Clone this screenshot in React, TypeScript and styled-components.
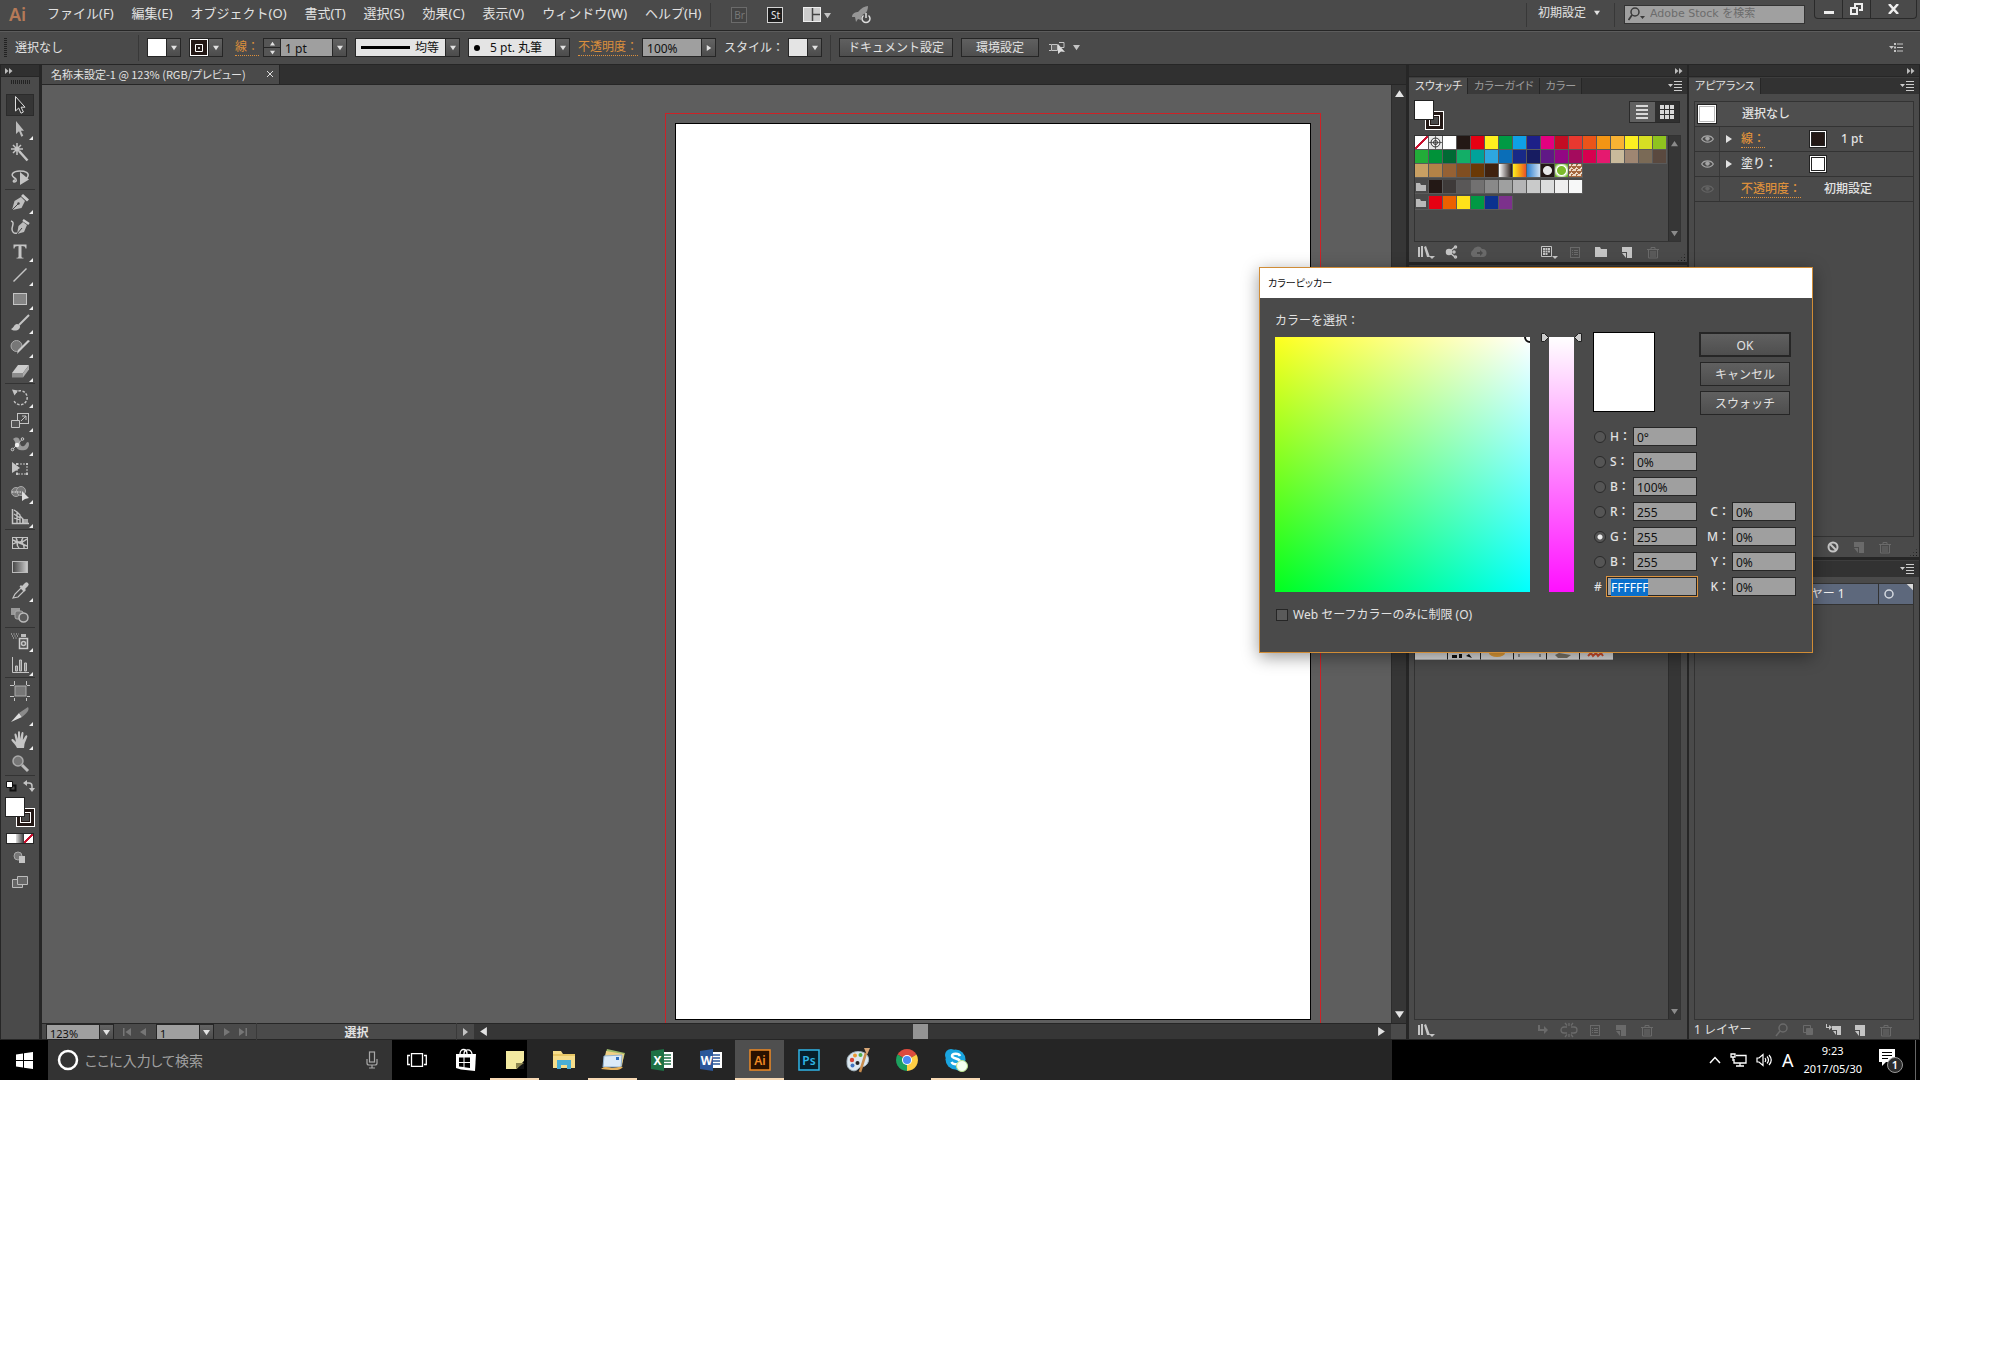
import React, { useEffect, useRef } from "react";
import styled, { createGlobalStyle, css } from "styled-components";

const c = {
  panel: "#4a4a4a",
  strip: "#323232",
  line: "#262626",
  edge: "#5c5c5c",
  field: "#9f9f9f",
  text: "#e2e2e2",
  dim: "#9c9c9c",
  off: "#6a6a6a",
  icon: "#c4c4c4",
  orange: "#dc8f3c",
  canvas: "#5e5e5e",
};

const Global = createGlobalStyle`
  *, *::before, *::after { box-sizing: border-box; }
  body { margin: 0; background: #fff; }
  body, button, input, select {
    font-family: "Noto Sans", "Noto Sans CJK JP", sans-serif;
    font-size: 12px;
    line-height: 16px;
  }
  button, input, select { margin: 0; padding: 0; border: 0; border-radius: 0; background: none; color: inherit; }
  svg { display: block; flex: none; }
`;

/* ---------- shell ---------- */

const Desktop = styled.main`
  position: relative;
  margin-right: 80px;
  aspect-ratio: 16 / 9;
  display: flex;
  flex-direction: column;
  overflow: hidden;
  color: ${c.text};
  background: ${c.panel};
  white-space: nowrap;
`;

const Bar = styled.div`
  flex: none;
  display: flex;
  align-items: center;
  background: ${c.panel};
  border-bottom: 1px solid ${c.line};
`;

const MenuBar = styled(Bar)`
  height: 31px;
  padding: 0 3px 0 9px;
`;

const Logo = styled.span`
  width: 29px;
  padding-bottom: 3px;
  font-size: 18px;
  line-height: 24px;
  font-weight: 600;
  color: #b67a58;
`;

const MenuItem = styled.button`
  padding: 0 9px 5px;
  font-size: 13px;
  line-height: 20px;
`;

const Divider = styled.span<{ $h?: number }>`
  flex: none;
  width: 1px;
  height: ${(p) => p.$h ?? 24}px;
  background: #383838;
`;

const Spacer = styled.span`
  flex: 1;
`;

const AppLinks = styled.div`
  display: flex;
  align-items: center;
  gap: 20px;
  padding-left: 15px;
  margin-left: 5px;
`;

const Badge = styled.button<{ $on?: boolean }>`
  width: 16px;
  height: 16px;
  border: 1px solid ${(p) => (p.$on ? "#d4d4d4" : "#6b6b6b")};
  background: ${(p) => (p.$on ? "#1d1d1d" : "#444")};
  color: ${(p) => (p.$on ? "#e8e8e8" : "#777")};
  font-size: 10px;
  line-height: 12px;
`;

const IconButton = styled.button<{ $dim?: boolean }>`
  display: flex;
  align-items: center;
  gap: 3px;
  color: ${(p) => (p.$dim ? c.off : c.icon)};
`;

const WorkspaceSelect = styled.label`
  display: flex;
  align-items: center;
  gap: 8px;
  padding: 0 14px 4px 11px;
  select {
    appearance: none;
    width: 48px;
  }
`;

const StockSearch = styled.label`
  display: flex;
  align-items: center;
  gap: 4px;
  width: 181px;
  height: 19px;
  margin: 0 9px 2px;
  padding: 0 3px;
  border: 1px solid #333;
  background: #a0a0a0;
  color: #3a3a3a;
  input {
    flex: 1;
    min-width: 0;
    outline: none;
    font-family: "DejaVu Sans", "Noto Sans CJK JP", sans-serif;
    font-size: 11px;
  }
  input::placeholder {
    color: #6c6c6c;
  }
`;

const WindowButtons = styled.div`
  align-self: flex-start;
  display: flex;
  height: 19px;
  border: 1px solid #2a2a2a;
  border-top: 0;
  border-radius: 0 0 4px 4px;
  button {
    width: 28px;
    display: grid;
    place-items: center;
    border-right: 1px solid #2a2a2a;
  }
  button:last-child {
    width: 45px;
    border-right: 0;
  }
`;

/* ---------- control bar ---------- */

const ControlBar = styled(Bar)`
  height: 34px;
  gap: 8px;
  padding: 0 17px 1px 4px;
  border-top: 1px solid ${c.edge};
`;

const Grip = styled.span<{ $wide?: boolean }>`
  flex: none;
  width: ${(p) => (p.$wide ? 19 : 3)}px;
  height: ${(p) => (p.$wide ? 4 : 20)}px;
  background: repeating-linear-gradient(
    ${(p) => (p.$wide ? "90deg" : "180deg")},
    #222 0 1px,
    transparent 1px 2px
  );
`;

const SelectionLabel = styled.span`
  width: 115px;
`;

const Group = styled.div<{ $indent?: boolean }>`
  display: flex;
  align-items: center;
  gap: 4px;
  padding-left: ${(p) => (p.$indent ? 4 : 0)}px;
`;

const HotLabel = styled.label`
  color: ${c.orange};
  border-bottom: 1px dotted ${c.orange};
`;

const Combo = styled.div`
  display: flex;
  height: 19px;
  border: 1px solid ${c.line};
  background: #565656;
`;

const Arrow = styled.button`
  width: 14px;
  display: grid;
  place-items: center;
  border-left: 1px solid ${c.line};
  background: linear-gradient(#636363, #4c4c4c);
`;

const Stepper = styled.span`
  display: flex;
  flex-direction: column;
  width: 17px;
  border-right: 1px solid ${c.line};
  button {
    flex: 1;
    display: grid;
    place-items: center;
  }
  button + button {
    border-top: 1px solid ${c.line};
  }
`;

const ComboInput = styled.input<{ $w: number }>`
  width: ${(p) => p.$w}px;
  padding: 2px 0 0 4px;
  background: ${c.field};
  color: #111;
`;

const SelectFace = styled.label<{ $w: number }>`
  width: ${(p) => p.$w}px;
  display: flex;
  align-items: center;
  gap: 5px;
  padding: 0 4px 0 5px;
  background: #e4e4e4;
  color: #111;
  select {
    appearance: none;
    flex: 1;
    min-width: 0;
  }
`;

const Chip = styled.button<{ $kind: "fill" | "stroke" | "style" }>`
  width: 18px;
  display: grid;
  place-items: center;
  background: ${(p) => (p.$kind === "stroke" ? "#231815" : p.$kind === "fill" ? "#fff" : "#e4e4e4")};
  ${(p) => p.$kind === "stroke" && "box-shadow: inset 0 0 0 1px #fff;"}
`;

const push = css`
  border: 1px solid ${c.line};
  background: linear-gradient(#606060, #4e4e4e);
  color: ${c.text};
`;

const BarButton = styled.button`
  ${push}
  min-width: 78px;
  height: 19px;
  padding: 0 8px;
`;

/* ---------- workspace ---------- */

const Workspace = styled.div`
  flex: 1;
  min-height: 0;
  display: flex;
  background: ${c.line};
  border-bottom: 1px solid ${c.line};
`;

const Toolbar = styled.nav`
  width: 40px;
  margin-right: 2px;
  display: flex;
  flex-direction: column;
  align-items: center;
  background: ${c.panel};
  border: 1px solid ${c.line};
  border-width: 0 1px;
`;

const DockHead = styled.div<{ $left?: boolean }>`
  flex: none;
  align-self: stretch;
  height: 12px;
  display: flex;
  align-items: center;
  justify-content: ${(p) => (p.$left ? "flex-start" : "flex-end")};
  padding: 0 4px;
  background: #303030;
  border-bottom: 1px solid ${c.line};
  color: #bbb;
`;

const GripRow = styled.div`
  padding: 3px 0 9px;
`;

const ToolGroup = styled.div`
  display: flex;
  flex-direction: column;
  width: 30px;
  align-items: center;
  border-bottom: 1px solid #333;
  margin-bottom: 1px;
`;

const ToolButton = styled.button<{ $on?: boolean; $more?: boolean }>`
  position: relative;
  width: 28px;
  height: 22px;
  margin: 1px 0;
  display: grid;
  place-items: center;
  color: ${c.icon};
  ${(p) => p.$on && "background: #353535; box-shadow: inset 0 0 0 1px #2b2b2b;"}
  &::after {
    content: "";
    display: ${(p) => (p.$more ? "block" : "none")};
    position: absolute;
    right: 1px;
    bottom: 0;
    border: 2px solid transparent;
    border-right-color: #eee;
    border-bottom-color: #eee;
  }
`;

const MiniRow = styled.div`
  display: flex;
  justify-content: space-between;
  width: 30px;
  padding: 3px 0 5px;
  color: ${c.icon};
`;

const FillStroke = styled.div`
  position: relative;
  width: 30px;
  height: 30px;
`;

const FillBox = styled.button`
  position: absolute;
  left: 0;
  top: 0;
  width: 20px;
  height: 20px;
  background: #fff;
  border: 1px solid #222;
`;

const StrokeBox = styled.button`
  position: absolute;
  right: 0;
  bottom: 0;
  width: 19px;
  height: 19px;
  background: ${c.panel};
  border: 1px solid #fff;
  box-shadow: inset 0 0 0 3px #231815, inset 0 0 0 4px #fff, inset 0 0 0 5px #231815;
`;

const ColorModes = styled.div`
  display: flex;
  width: 28px;
  height: 11px;
  margin: 6px 0 2px;
  border: 1px solid ${c.line};
  button {
    flex: 1;
    background: #fff;
  }
  button:nth-child(2) {
    background: linear-gradient(90deg, #ddd, #333);
  }
  button:nth-child(3) {
    background: linear-gradient(135deg, #fff 42%, #c8102e 43% 57%, #fff 58%);
  }
`;

const Document = styled.section`
  flex: 1;
  min-width: 0;
  display: flex;
  flex-direction: column;
`;

const TabStrip = styled.div`
  flex: none;
  height: 20px;
  display: flex;
  background: #303030;
  border-bottom: 1px solid ${c.line};
`;

const DocTab = styled.div`
  display: flex;
  align-items: center;
  justify-content: space-between;
  width: 238px;
  padding: 0 6px 1px 9px;
  background: ${c.panel};
  border-right: 1px solid ${c.line};
  font-size: 11px;
  font-family: "Noto Sans CJK JP", sans-serif;
  font-feature-settings: "palt";
`;

const CanvasRow = styled.div`
  flex: 1;
  min-height: 0;
  display: flex;
`;

const Canvas = styled.div`
  position: relative;
  flex: 1;
  background: ${c.canvas};
`;

const Bleed = styled.div`
  position: absolute;
  top: 28px;
  right: 70px;
  bottom: 0;
  width: 656px;
  border: 1px solid #cc2227;
  border-bottom: 0;
`;

const Artboard = styled.div`
  position: absolute;
  top: 38px;
  right: 80px;
  bottom: 3px;
  width: 636px;
  background: #fff;
  border: 1px solid #000;
`;

const VScroll = styled.div<{ $w?: number }>`
  flex: none;
  width: ${(p) => p.$w ?? 15}px;
  display: flex;
  flex-direction: column;
  align-items: center;
  justify-content: space-between;
  padding: 4px 0;
  background: #363636;
  color: ${(p) => (p.$w ? "#8b8b8b" : "#e4e4e4")};
  border-left: 1px solid #2c2c2c;
`;

const StatusRow = styled.div`
  flex: none;
  height: 16px;
  display: flex;
  align-items: center;
  background: ${c.panel};
  border-top: 1px solid ${c.line};
`;

const StatusCombo = styled(Combo)`
  height: 15px;
  border-bottom: 0;
  font-size: 11px;
`;

const StatusInput = styled(ComboInput)`
  font-size: 11px;
  line-height: 14px;
  padding: 3px 0 0 3px;
`;

const NavGroup = styled.div`
  display: flex;
  justify-content: space-between;
  width: 42px;
  padding: 0 9px;
  color: #767676;
`;

const StatusText = styled.span`
  flex: none;
  width: 201px;
  padding-top: 2px;
  text-align: center;
  font-weight: 600;
  border: 1px solid #3a3a3a;
  border-width: 0 1px;
`;

const HScroll = styled.div`
  flex: 1;
  align-self: stretch;
  display: flex;
  align-items: center;
  justify-content: space-between;
  padding: 0 5px;
  background: #363636;
`;

const HThumb = styled.span`
  width: 15px;
  height: 15px;
  margin-right: 24px;
  background: #949494;
`;

/* ---------- docks ---------- */

const Dock = styled.aside<{ $w: number }>`
  flex: none;
  width: ${(p) => p.$w}px;
  margin-left: 3px;
  display: flex;
  flex-direction: column;
  & + & {
    margin: 0 1px 0 2px;
  }
`;

const Panel = styled.section<{ $basis?: number }>`
  flex: ${(p) => (p.$basis ? `0 0 ${p.$basis}px` : "1 1 0")};
  min-height: 0;
  display: flex;
  flex-direction: column;
  background: ${c.panel};
  & + & {
    margin-top: 3px;
  }
`;

const PanelTabs = styled.div`
  flex: none;
  height: 17px;
  display: flex;
  align-items: stretch;
  background: ${c.strip};
  border-top: 1px solid #3d3d3d;
`;

const PanelTab = styled.button<{ $on?: boolean }>`
  padding: 0 5px 2px 6px;
  font-family: "Noto Sans CJK JP", sans-serif;
  font-size: 11px;
  font-feature-settings: "palt";
  line-height: 14px;
  color: ${(p) => (p.$on ? c.text : c.dim)};
  background: ${(p) => (p.$on ? c.panel : "#3a3a3a")};
  border-right: 1px solid ${c.line};
`;

const PanelMenu = styled.button`
  margin-left: auto;
  padding-right: 5px;
  color: #ccc;
`;

const SwatchHead = styled.div`
  display: flex;
  justify-content: space-between;
  padding: 6px 7px 5px 5px;
`;

const ViewToggle = styled.div`
  display: flex;
  width: 51px;
  height: 22px;
  margin-top: 1px;
  border: 1px solid #2a2a2a;
  button {
    flex: 1;
    display: grid;
    place-items: center;
    background: #606060;
    color: #d8d8d8;
  }
  button + button {
    background: #303030;
  }
`;

const ListBox = styled.div<{ $h?: number; $top?: number }>`
  ${(p) => (p.$h ? `height: ${p.$h}px;` : "flex: 1; min-height: 0;")}
  margin: ${(p) => p.$top ?? 0}px 6px 0 5px;
  display: flex;
  border: 1px solid #333;
`;

const SwatchRows = styled.div`
  flex: 1;
`;

const SwatchRow = styled.div<{ $gap?: boolean }>`
  display: flex;
  margin-top: ${(p) => (p.$gap ? 2 : 0)}px;
`;

const Swatch = styled.button<{ $bg?: string }>`
  width: 14px;
  height: 14px;
  background: ${(p) => p.$bg ?? "transparent"};
  border: 1px solid #5a5a5a;
  border-width: 0 1px 1px 0;
`;

const Footer = styled.div<{ $end: number; $h: number }>`
  flex: none;
  height: ${(p) => p.$h}px;
  display: flex;
  align-items: center;
  gap: 8px;
  padding: 0 ${(p) => p.$end}px 0 8px;
`;

const LayerFooter = styled(Footer)`
  padding-left: 5px;
`;

const FootButton = styled(IconButton)`
  width: 18px;
  height: 16px;
  justify-content: center;
  gap: 0;
`;

const Corner = styled.span`
  align-self: flex-end;
  width: 9px;
  height: 9px;
  margin-left: 7px;
  background: radial-gradient(#1c1c1c 40%, transparent 45%) 0 0 / 3px 3px;
  clip-path: polygon(100% 0, 100% 100%, 0 100%);
`;

const SymbolRow = styled.div`
  display: flex;
  align-self: flex-start;
  flex: 1;
`;

const SymbolCell = styled.button`
  width: 33px;
  height: 33px;
  background: #dcdcdc;
  border-right: 1px solid #222;
  border-bottom: 1px solid #aaa;
  &:last-child {
    border-right: 0;
  }
`;

const Rows = styled.div<{ $top?: number }>`
  flex: 1;
  min-height: 0;
  margin: ${(p) => p.$top ?? 6}px 5px 0;
  border: 1px solid #333;
`;

const AppearanceRow = styled.div<{ $head?: boolean }>`
  display: flex;
  align-items: center;
  height: 25px;
  padding-left: ${(p) => (p.$head ? 2 : 0)}px;
  border-bottom: 1px solid #333;
  background: ${(p) => (p.$head ? "#4e4e4e" : "transparent")};
  font-weight: 500;
`;

const EyeCell = styled(IconButton)`
  width: 25px;
  height: 24px;
  padding-left: 6px;
  border-right: 1px solid #383838;
  color: ${(p) => (p.$dim ? "#636363" : "#a4a4a4")};
`;

const Twisty = styled.button`
  width: 21px;
  padding-left: 5px;
`;

const AttrName = styled.span<{ $w: number }>`
  width: ${(p) => p.$w}px;
  font-weight: 500;
`;

const Thumb = styled.span<{ $bg?: string; $size: number }>`
  width: ${(p) => p.$size}px;
  height: ${(p) => p.$size}px;
  border: 1px solid #222;
  background: ${(p) => p.$bg ?? "#fff"};
  box-shadow: inset 0 0 0 1px #fff, inset 0 0 0 2px ${(p) => (p.$size > 18 ? "#bbb" : "#222")};
`;

const AttrValue = styled.span<{ $gap?: boolean }>`
  padding-left: ${(p) => (p.$gap ? 14 : 0)}px;
`;

const LayerRow = styled.div`
  display: flex;
  align-items: center;
  height: 21px;
  background: #5d687c;
  color: #f0f0f0;
  border-bottom: 1px solid #333;
`;

const LayerName = styled.span`
  flex: 1;
  padding-left: 92px;
  line-height: 20px;
  border-right: 1px solid #333;
`;

const LayerTarget = styled.button`
  width: 34px;
  height: 20px;
  padding-left: 5px;
  color: #d5d9e0;
  background: linear-gradient(225deg, #dadada 4px, transparent 5px);
`;

/* ---------- colour picker ---------- */

const Dialog = styled.section`
  position: absolute;
  top: 267px;
  right: 107px;
  width: 554px;
  border: 1px solid #d08c36;
  background: ${c.panel};
  box-shadow: 0 4px 16px rgba(0, 0, 0, 0.4);
`;

const DialogTitle = styled.h2`
  margin: 0;
  padding: 0 8px;
  background: #fff;
  color: #111;
  font: 400 10px/30px "Noto Sans CJK JP", sans-serif;
  font-feature-settings: "palt";
`;

const DialogBody = styled.div`
  display: flex;
  justify-content: space-between;
  padding: 0 16px 29px 15px;
`;

const PickerSide = styled.div`
  padding-top: 15px;
`;

const PickerRow = styled.div`
  display: flex;
  gap: 19px;
  padding: 8px 0 15px;
`;

const ColorField = styled.div`
  position: relative;
  overflow: hidden;
  width: 255px;
  height: 255px;
  background: linear-gradient(90deg, #00001e, #00f), linear-gradient(#f00, #000), #0f0;
  background-blend-mode: screen;
  &::after {
    content: "";
    position: absolute;
    top: -6px;
    right: -6px;
    width: 12px;
    height: 12px;
    border: 2px solid #111;
    border-radius: 50%;
  }
`;

const SliderWrap = styled.div`
  position: relative;
  width: 25px;
  height: 255px;
  input {
    appearance: none;
    writing-mode: vertical-lr;
    direction: rtl;
    display: block;
    width: 25px;
    height: 255px;
    background: linear-gradient(#fff, #ff10ff);
  }
  input::-webkit-slider-thumb {
    appearance: none;
    width: 25px;
    height: 1px;
  }
  svg {
    position: absolute;
    top: -4px;
    left: -8px;
  }
`;

const CheckLabel = styled.label`
  display: flex;
  align-items: center;
  gap: 5px;
  padding-left: 1px;
  input {
    appearance: none;
    width: 12px;
    height: 12px;
    border: 1px solid ${c.line};
    background: #5a5a5a;
  }
`;

const ValueSide = styled.div`
  padding-top: 34px;
  width: 203px;
`;

const TopRow = styled.div`
  display: flex;
  justify-content: space-between;
  padding: 0 5px 9px 0;
`;

const Preview = styled.div`
  width: 62px;
  height: 80px;
  border: 1px solid #000;
  background: #fff;
`;

const DialogButtons = styled.div`
  display: flex;
  flex-direction: column;
  align-items: center;
  gap: 5px;
`;

const DialogButton = styled.button<{ $primary?: boolean }>`
  ${push}
  width: ${(p) => (p.$primary ? 92 : 90)}px;
  height: ${(p) => (p.$primary ? 25 : 24)}px;
  padding-top: 2px;
  border-width: ${(p) => (p.$primary ? 2 : 1)}px;
`;

const Columns = styled.div`
  display: flex;
  justify-content: space-between;
  align-items: flex-end;
`;

const FieldRow = styled.div<{ $end?: boolean }>`
  height: 25px;
  display: flex;
  align-items: center;
  justify-content: ${(p) => (p.$end ? "flex-end" : "flex-start")};
  gap: ${(p) => (p.$end ? 2 : 4)}px;
  padding-left: 1px;
`;

const Radio = styled.input`
  appearance: none;
  width: 12px;
  height: 12px;
  border: 1px solid #2a2a2a;
  border-radius: 50%;
  background: #555;
  &:checked {
    background: radial-gradient(#eee 2px, #555 3px);
  }
`;

const FieldLabel = styled.label<{ $w?: number }>`
  width: ${(p) => (p.$w ? `${p.$w}px` : "auto")};
  margin-right: ${(p) => (p.$w ? "-4px" : "0")};
  font-weight: 500;
`;

const ValueInput = styled.input`
  width: 64px;
  height: 19px;
  padding: 2px 0 0 3px;
  border: 1px solid ${c.line};
  background: ${c.field};
  color: #111;
  outline: none;
`;

const HexInput = styled(ValueInput)`
  width: 92px;
  height: 21px;
  margin-left: -4px;
  padding: 1px 0 0 4px;
  border: 1px solid #dc9440;
  box-shadow: inset 0 0 0 1px ${c.line};
  &::selection {
    background: #0a70cc;
    color: #fff;
  }
`;

/* ---------- taskbar ---------- */

const Taskbar = styled.footer`
  flex: none;
  height: 40px;
  display: flex;
  background: #000;
  color: #fff;
`;

const TaskButton = styled.button<{ $state?: "run" | "active"; $bg?: string }>`
  flex: none;
  width: 49px;
  display: grid;
  place-items: center;
  background: ${(p) => (p.$state === "active" ? "#4f4f4f" : p.$bg ?? "transparent")};
  box-shadow: ${(p) => (p.$state ? "inset 0 -2px 0 #f7d9b4" : "none")};
`;

const StartButton = styled(TaskButton)`
  width: 48px;
`;

const CortanaBox = styled.label`
  width: 344px;
  display: flex;
  align-items: center;
  gap: 6px;
  padding: 0 14px 0 9px;
  background: #333;
  color: #a8a8a8;
  input {
    flex: 1;
    min-width: 0;
    font: 400 14px/20px "Noto Sans CJK JP", sans-serif;
    font-feature-settings: "palt";
  }
  input::placeholder {
    color: #a0a0a0;
  }
`;

const RunningApps = styled.div`
  flex: 1;
  display: flex;
  background: #252525;
`;

const Tray = styled.div`
  flex: none;
  width: 528px;
  display: flex;
  justify-content: flex-end;
  align-items: center;
  padding-right: 4px;
  background: #000;
`;

const TrayIcons = styled.div`
  display: flex;
  align-items: center;
  gap: 9px;
`;

const ImeMark = styled.span`
  font-size: 18px;
  line-height: 24px;
`;

const Clock = styled.time`
  padding: 0 16px 0 10px;
  text-align: center;
  font-size: 11px;
  line-height: 18px;
`;

const ShowDesktop = styled.button`
  align-self: stretch;
  margin-left: 11px;
  border-left: 1px solid #666;
`;

/* ---------- icons ---------- */

const Tri = ({ d = "down", s = 7 }: { d?: "up" | "down" | "left" | "right"; s?: number }) => {
  const pts = { down: "0,1 8,1 4,7", up: "0,7 8,7 4,1", left: "7,0 7,8 1,4", right: "1,0 1,8 7,4" }[d];
  return (
    <svg width={s} height={s} viewBox="0 0 8 8" fill="currentColor"><polygon points={pts} /></svg>
  );
};

const S = { fill: "none", stroke: "currentColor" } as const;

const toolArt: Record<string, React.ReactNode> = {
  選択: <path d="M5.500 1.500V16l3.200-3 2.300 5.200 2.400-1.200-2.300-4.800H15z" fill="#2a2a2a" stroke="#ddd" />,
  ダイレクト選択: <path d="M6 2v13l3-2.700 2.300 5.500 2-1-2.400-5H14z" fill="#bbb" />,
  自動選択: <g {...S}><path d="M9 8l8.500 9.500" strokeWidth="2.500" /><path d="M7 0v12M1 6h12M3 2l8 8M11 2l-8 8" strokeWidth="1.500" /><circle cx="7" cy="6" r="2" fill="currentColor" /></g>,
  なげなわ: <g><path d="M4 15c3 0 3-3 0-4.500C0 8 3 4 9.500 4S19 6 18 9s-4 4-7 3.500M4 15c-1 0-1-2 1-2" {...S} strokeWidth="1.500" /><path d="M10 5v13l9-5.500z" fill="currentColor" /></g>,
  ペン: <g><path d="M2 17l2.500-9L11 4l4 4-3.500 7z" fill="#bdbdbd" /><path d="M2 17l6-6" stroke="#444" /><circle cx="8.500" cy="10.500" r="1.200" fill="#444" /><path d="M12 2l6 5.500" stroke="#ccc" strokeWidth="3" /></g>,
  曲線: <g><path d="M7 17l1.500-8L13 5l4 3-3 7z" fill="#bdbdbd" /><path d="M7 17l5-6" stroke="#444" /><path d="M13 3l6 4" stroke="#ccc" strokeWidth="2.500" /><path d="M1 4c4 1 1 5 1 8s2 5 5 4" {...S} strokeWidth="1.500" /></g>,
  文字: <path d="M3.500 3.500h13v4h-1c-.3-2-1-2.600-4-2.600v10.600c0 1 .5 1.200 2 1.300v.7h-7v-.7c1.500-.1 2-.3 2-1.300V4.900c-3 0-3.700.6-4 2.600h-1z" fill="currentColor" />,
  直線: <path d="M3.500 16.500l13-13" {...S} strokeWidth="1.500" />,
  長方形: <rect x="3.500" y="4.500" width="13" height="11" fill="#858585" stroke="#c4c4c4" />,
  ブラシ: <g><path d="M19 2L9 12" {...S} strokeWidth="2" /><path d="M1 16c3-1 3-5 6-5 3 0 4 3 2 5s-6 2-8 0z" fill="currentColor" /></g>,
  塗りブラシ: <g><circle cx="6.500" cy="9" r="5.500" fill="#777" stroke="#aaa" /><path d="M20 4L10 14l-3 3 1-4L18 3z" fill="#ccc" /></g>,
  消しゴム: <g><path d="M2 12l6-8h11l-6 8z" fill="#ccc" /><path d="M2 12h11v4.500H2z" fill="#8b8b8b" /><path d="M13 12l6-8v4.500l-6 8z" fill="#aaa" /></g>,
  回転: <g><path d="M5 6a7 7 0 1 1-1 8" {...S} strokeWidth="1.500" strokeDasharray="2.500 1.500" /><path d="M2 2.500l6 1-3.500 5z" fill="currentColor" /></g>,
  拡大縮小: <g {...S}><rect x="7.500" y="2.500" width="11" height="10" /><path d="M1.500 9.500h8v7h-8z" fill="#555" /><path d="M11 10l5-5M12 5h4v4" /></g>,
  線幅: <g><path d="M3 4c4-3 7-1 7 3s2 5 4 4 2-4 4-4c2 1 1 7-3 8-5 1-8 0-9-4S5 6 3 4z" fill="#999" /><path d="M2 15L12.500 4" {...S} /><circle cx="7" cy="10" r="2.200" fill="#eee" /><circle cx="2.500" cy="14.500" r="1.300" fill="#555" stroke="#ccc" /><circle cx="12.500" cy="4" r="1.300" fill="#555" stroke="#ccc" /></g>,
  自由変形: <g><path d="M2 3v11l8-5z" fill="currentColor" /><rect x="7" y="5" width="10" height="10" {...S} strokeDasharray="2 1" /><path d="M6 4h2v2H6zM16 4h2v2h-2zM6 14h2v2H6zM16 14h2v2h-2z" fill="currentColor" /></g>,
  シェイプ形成: <g><circle cx="6" cy="9" r="4.500" fill="#777" stroke="#aaa" /><circle cx="11" cy="8" r="4.500" fill="#777" stroke="#aaa" /><path d="M2 9h10" stroke="#eee" strokeDasharray="1.500 1" /><path d="M12 8v10l3-2 4-1z" fill="#ddd" /></g>,
  遠近グリッド: <g {...S}><path d="M2.500 2v14.500H19" strokeWidth="1.500" /><path d="M4 3l3 2v11M7 5l3 3v8M10 9l3 3v4M4 7l6 4M4 11l6 2M12 13h6M12 15h6" strokeWidth="1.300" /></g>,
  メッシュ: <g {...S}><rect x="2.500" y="4.500" width="15" height="11" /><path d="M3 11c5-4 9 0 14-5M6 5c3 4-1 7 3 10M13 5c-4 4 2 6 1 10M3 7l4 2 10 4" strokeWidth="1.500" /></g>,
  グラデーション: <rect x="2.500" y="4.500" width="15" height="11" fill="url(#tool-fade)" stroke="#bbb" />,
  スポイト: <g><path d="M3 17l2-4 6-6 3 3-6 6z" {...S} strokeWidth="1.200" /><path d="M9.500 5.500l5 5 1.500-1.500-1-1 3-3a2 2 0 0 0-3-3l-3 3-1-1z" fill="currentColor" /></g>,
  ブレンド: <g><rect x="1" y="3" width="9" height="7" fill="#999" /><rect x="5" y="6" width="8" height="8" rx="2" fill="#777" stroke="#aaa" /><circle cx="13.500" cy="12.500" r="4.500" fill="#5a5a5a" stroke="#bbb" strokeWidth="1.500" /></g>,
  シンボル: <g><path d="M9.500 7.500h8v10h-8z" fill="#555" stroke="#ccc" strokeWidth="1.500" /><path d="M11 3h5v3h-5z" fill="#bbb" /><circle cx="13.500" cy="12.500" r="2" {...S} strokeWidth="1.500" /><path d="M1 3h8M2 5h7M3 7h5" stroke="#ccc" strokeDasharray="1 1.500" /></g>,
  グラフ: <g {...S}><path d="M2.500 2v15.500H19" /><path d="M5.500 11v5h2v-5zM9.500 5v11h2V5zM14.500 8v8h2V8z" fill="#888" /></g>,
  アートボード: <g><rect x="5" y="5" width="11" height="10" fill="#777" stroke="#aaa" /><path d="M0 4.500h4M17 4.500h3M0 15.500h4M17 15.500h3M4.500 0v4M4.500 17v3M16.500 0v4M16.500 17v3" {...S} /></g>,
  スライス: <g><path d="M1 17L9 8l3 4z" fill="#ddd" /><path d="M9 8l9-6c2 3-2 7-6 10z" fill="#8a8a8a" /></g>,
  手のひら: <path d="M7 19c-1-3-4-5-5.500-7.500C1 10 3 9.500 4 11l2 2L4.500 6c-.3-1.800 1.500-2 2-.5L8 10V3.500c0-1.800 2-1.800 2 0V10l1.500-6c.5-1.500 2.200-1 2 .5L12.800 11l2.500-4c1-1.300 2.500-.5 1.900 1-1 3-2.200 5-2.700 7L14 19z" fill="currentColor" />,
  ズーム: <g><circle cx="8" cy="8" r="5" fill="#777" stroke="#aaa" strokeWidth="1.500" /><path d="M12 12l6 6" stroke="#bbb" strokeWidth="3" /></g>,
};

const toolGroups: [string, boolean][][] = [
  [["選択", false], ["ダイレクト選択", true], ["自動選択", false], ["なげなわ", false]],
  [["ペン", true], ["曲線", false], ["文字", true], ["直線", true], ["長方形", true], ["ブラシ", true], ["塗りブラシ", true], ["消しゴム", true]],
  [["回転", true], ["拡大縮小", true], ["線幅", true], ["自由変形", false], ["シェイプ形成", true], ["遠近グリッド", true]],
  [["メッシュ", false], ["グラデーション", false], ["スポイト", true], ["ブレンド", false]],
  [["シンボル", true], ["グラフ", true]],
  [["アートボード", false], ["スライス", true], ["手のひら", true], ["ズーム", false]],
];

const footArt = {
  library: <g fill="currentColor"><path d="M1 3h2v10H1zM4 2h2v11H4zM7 3l2-1 4 11h-3z" /><path d="M12 12h6l-3 3z" /></g>,
  share: <g {...S} strokeWidth="1.500"><path d="M12 3L6 8l6 5" /><circle cx="6" cy="8" r="2.500" fill="currentColor" /><circle cx="11" cy="8" r="1" /><circle cx="12.500" cy="3" r="1" /><circle cx="12.500" cy="13" r="1" /></g>,
  cloud: <path d="M4 13a4 4 0 0 1 0-7 5 5 0 0 1 9-1 4 4 0 0 1 1 8zM8 8v2h3v2l3-3-3-3v2z" fill="currentColor" fillRule="evenodd" />,
  grid: <g><path d="M1.500 2.500h10v10h-10z" fill="#444" stroke="currentColor" /><path d="M3 4h2v2H3zM5.500 4h2v2h-2zM8 4h2v2H8zM3 6.500h2v2H3zM5.500 6.500h2v2h-2zM8 6.500h2v2H8zM3 9h2v2H3zM5.500 9h2v2h-2z" fill="currentColor" /><path d="M12 12h6l-3 3z" fill="currentColor" /></g>,
  list: <g {...S}><rect x="4.500" y="3.500" width="9" height="10" /><path d="M6 6.500h1M8 6.500h4M6 8.500h1M8 8.500h4M6 10.500h1M8 10.500h4" /></g>,
  folder: <path d="M3 3h5l1 2h6v8H3z" fill="currentColor" />,
  page: <path d="M4 3h10v11H9V8H4zM4 9h4v5z" fill="currentColor" />,
  trash: <g {...S}><path d="M3 5.500h12M7 5V3.500h4V5M4.500 6v8h9V6M7 7v6M9 7v6M11 7v6" /></g>,
  none: <g {...S} strokeWidth="2"><circle cx="9" cy="8" r="4.500" /><path d="M6 5l6 6" /></g>,
  place: <path d="M4 3v6h6v3l4-4-4-4v3H6V3z" fill="currentColor" />,
  unlink: <g {...S} strokeWidth="1.300"><path d="M7 5H4a3 3 0 0 0 0 6h3M11 5h3a3 3 0 0 1 0 6h-3M9 1v3M9 12v3M5 1l2 2.500M13 1l-2 2.500M5 15l2-2.500M13 15l-2-2.500" /></g>,
  find: <g {...S} strokeWidth="1.500"><circle cx="10" cy="6" r="4" /><path d="M7 9l-4 5" /></g>,
  clip: <g {...S}><path d="M4.500 3.500h7v7h-7z" /><path d="M7.500 6.500h6v6h-6z" fill="currentColor" /></g>,
  sub: <g fill="currentColor"><path d="M7 4h9v9h-4V8H7zM8 9h3v4z" /><path d="M1 2v4h3v2l3-3-3-2v2H2V2z" /></g>,
};

const Foot = ({ name, dim, label }: { name: keyof typeof footArt; dim?: boolean; label: string }) => (
  <FootButton $dim={dim} aria-label={label}>
    <svg width="18" height="16" viewBox="0 0 18 16">{footArt[name]}</svg>
  </FootButton>
);

const DoubleArrow = () => (
  <svg width="8" height="6" viewBox="0 0 8 6" fill="currentColor"><path d="M0 0l3.500 3L0 6zM4 0l3.500 3L4 6z" /></svg>
);

const MenuLines = () => (
  <svg width="14" height="10" viewBox="0 0 14 10" fill="currentColor"><path d="M0 3h5L2.500 6zM6 0h8v1H6zM6 3h8v1H6zM6 6h8v1H6zM6 9h8v1H6z" /></svg>
);

const Eye = () => (
  <svg width="13" height="10" viewBox="0 0 13 10" {...S}><path d="M.7 5C3 .8 10 .8 12.300 5 10 9.200 3 9.200.7 5z" strokeWidth="1.300" /><circle cx="6.500" cy="4.500" r="1.800" fill="currentColor" /></svg>
);

const FolderSwatch = () => (
  <svg width="12" height="12" viewBox="0 0 12 12"><path d="M1 2h4l1 2h5v6H1z" fill="#b8b8b8" /></svg>
);

/* ---------- data ---------- */

const menus = ["ファイル(F)", "編集(E)", "オブジェクト(O)", "書式(T)", "選択(S)", "効果(C)", "表示(V)", "ウィンドウ(W)", "ヘルプ(H)"];

const row1 = "#fff #231815 #e60012 #fff01f #009a44 #0fa0e6 #1d2088 #e4007f #c30d23 #e8382f #ea5419 #f39514 #f9b233 #fcee21 #d7df23 #8fc31f".split(" ");
const row2 = "#22ac38 #009239 #006934 #13ae67 #00a29a #2ea7e0 #0a6eb8 #182987 #171c61 #601986 #920783 #a40b5d #d7004f #e5196f #c9ba9b #9f8672 #7a6a56 #5a493f".split(" ");
const row3 = [
  "#c9a063", "#b28247", "#956134", "#804e21", "#6a3906", "#40220f",
  "linear-gradient(90deg, #fff, #231815)",
  "linear-gradient(90deg, #fcee21, #f39514 60%, #e8502f)",
  "linear-gradient(90deg, #2a7fd0, #cfe0f2)",
  "radial-gradient(#e8e8e8 4px, #231815 5px)",
  "radial-gradient(#7cbb2c 4px, #fff 5px, #6ab023 8px)",
  "conic-gradient(#a5673f 12%, #ecd9c6 0 25%, #a5673f 0 40%, #ecd9c6 0 60%, #a5673f 0 80%, #ecd9c6 0) 0 0 / 5px 5px",
];
const grays = "#231815 #3e3a39 #595757 #727171 #898989 #9fa0a0 #b5b5b6 #c9caca #dcdddd #efefef #f7f8f8".split(" ");
const brights = "#e60012 #eb6100 #ffe21a #009944 #0b318f #7c318c".split(" ");

const rgb: [string, string, string][] = [
  ["H", "0°", "h"], ["S", "0%", "s"], ["B", "100%", "br"], ["R", "255", "r"], ["G", "255", "g"], ["B", "255", "b"],
];
const cmyk: [string, string][] = [["C", "0%"], ["M", "0%"], ["Y", "0%"], ["K", "0%"]];

const symbolArt = [
  null,
  <path d="M4 28h5v3H4zM11 27h3v4h-3zM18 29l3-2 3 4z" fill="#111" />,
  <ellipse cx="16" cy="26" rx="8" ry="4" fill="#e9a23b" />,
  <path d="M5 27v3M26 27v3" stroke="#444" />,
  <path d="M8 28l4-2 12 2-4 3h-9z" fill="#7b766a" />,
  <path d="M8 29l3-3 2 3 3-3 2 3 3-3 2 3" stroke="#d2502f" strokeWidth="2" fill="none" />,
];

/* ---------- sections ---------- */

const Top = () => (
  <>
    <MenuBar as="header">
      <Logo>Ai</Logo>
      {menus.map((m) => <MenuItem key={m}>{m}</MenuItem>)}
      <Divider />
      <AppLinks>
        <Badge>Br</Badge>
        <Badge $on>St</Badge>
        <IconButton aria-label="ドキュメントの配置">
          <svg width="18" height="16" viewBox="0 0 18 16"><rect x=".5" y=".5" width="17" height="14" fill="#ccc" stroke="#eee" /><path d="M9.500 1v13M10 7.500h7" stroke="#444" strokeWidth="1.500" /></svg>
          <Tri />
        </IconButton>
        <IconButton aria-label="GPU パフォーマンス">
          <svg width="22" height="20" viewBox="0 0 22 20"><path d="M1 12c0-4 4-5 6-5 3-4 7-6 10-6 0 3-1 6-3 8l-4 6-3-1-2 3-1-5z" fill="#959595" /><circle cx="15" cy="13.500" r="5" fill="#4a4a4a" /><path d="M12.500 10.500a4 4 0 1 0 5 0M15 8v5" {...S} stroke="#ddd" strokeWidth="1.500" /></svg>
        </IconButton>
      </AppLinks>
      <Spacer />
      <Divider />
      <WorkspaceSelect>
        <select aria-label="ワークスペース"><option>初期設定</option></select>
        <Tri s={6} />
      </WorkspaceSelect>
      <Divider />
      <StockSearch>
        <svg width="18" height="14" viewBox="0 0 18 14" {...S}><circle cx="7" cy="5" r="4" strokeWidth="1.500" /><path d="M4 8l-3.500 5" strokeWidth="1.800" /><path d="M12 9h5l-2.500 3z" fill="currentColor" stroke="none" /></svg>
        <input placeholder="Adobe Stock を検索" aria-label="Adobe Stock を検索" />
      </StockSearch>
      <WindowButtons>
        <button aria-label="最小化"><svg width="12" height="12" viewBox="0 0 12 12"><path d="M1 8h10v3H1z" fill="#eee" /></svg></button>
        <button aria-label="元に戻す"><svg width="13" height="12" viewBox="0 0 13 12" fill="none" stroke="#eee" strokeWidth="2"><path d="M5 4V1h7v6H9" /><path d="M1 5h6v6H1z" /></svg></button>
        <button aria-label="閉じる"><svg width="11" height="10" viewBox="0 0 11 10"><path d="M1 0l9 10M10 0L1 10" stroke="#eee" strokeWidth="2.500" /></svg></button>
      </WindowButtons>
    </MenuBar>

    <ControlBar>
      <Grip />
      <SelectionLabel>選択なし</SelectionLabel>
      <Divider $h={26} />
      <Combo><Chip $kind="fill" aria-label="塗り" /><Arrow aria-label="塗りメニュー"><Tri s={6} /></Arrow></Combo>
      <Combo>
        <Chip $kind="stroke" aria-label="線の色"><svg width="8" height="8" viewBox="0 0 8 8" fill="none" stroke="#fff"><path d="M.5.5h7v7h-7zM3.500 3.500h1v1h-1z" /></svg></Chip>
        <Arrow aria-label="線メニュー"><Tri s={6} /></Arrow>
      </Combo>
      <Group $indent>
        <HotLabel htmlFor="stroke-w">線：</HotLabel>
        <Combo>
          <Stepper><button aria-label="増やす"><Tri d="up" s={5} /></button><button aria-label="減らす"><Tri s={5} /></button></Stepper>
          <ComboInput id="stroke-w" $w={51} defaultValue="1 pt" />
          <Arrow aria-label="線幅メニュー"><Tri s={6} /></Arrow>
        </Combo>
      </Group>
      <Combo>
        <SelectFace $w={89}>
          <svg width="49" height="3" viewBox="0 0 49 3"><path d="M0 0h49v3H0z" /></svg>
          <select aria-label="可変線幅プロファイル"><option>均等</option></select>
        </SelectFace>
        <Arrow aria-label="プロファイルメニュー"><Tri s={6} /></Arrow>
      </Combo>
      <Combo>
        <SelectFace $w={86}>
          <svg width="11" height="6" viewBox="0 0 11 6"><circle cx="3" cy="3" r="3" /></svg>
          <select aria-label="ブラシ定義"><option>5 pt. 丸筆</option></select>
        </SelectFace>
        <Arrow aria-label="ブラシメニュー"><Tri s={6} /></Arrow>
      </Combo>
      <Group>
        <HotLabel htmlFor="opacity">不透明度：</HotLabel>
        <Combo><ComboInput id="opacity" $w={58} defaultValue="100%" /><Arrow aria-label="不透明度スライダー"><Tri d="right" s={6} /></Arrow></Combo>
      </Group>
      <Group>
        <span>スタイル：</span>
        <Combo><Chip $kind="style" aria-label="スタイル" /><Arrow aria-label="スタイルメニュー"><Tri s={6} /></Arrow></Combo>
      </Group>
      <Divider $h={26} />
      <BarButton>ドキュメント設定</BarButton>
      <BarButton>環境設定</BarButton>
      <IconButton aria-label="類似オブジェクトを選択">
        <svg width="23" height="16" viewBox="0 0 23 16" {...S}><path d="M4.500 4.500h6v6h-6z" fill="#666" /><path d="M12 2.500h5v5h-3" /><path d="M2 4.500h2M2 10.500h2" /><path d="M11 4v10l3-2.500 4 .5z" fill="#ddd" stroke="none" /></svg>
        <Tri />
      </IconButton>
      <Spacer />
      <IconButton aria-label="コントロールパネルメニュー">
        <svg width="14" height="9" viewBox="0 0 14 9" fill="currentColor"><path d="M0 3h5L2.500 6zM5 0h2v2H5zM5 3.500h2v2H5zM5 7h2v2H5zM8 .5h6v1H8zM8 4h6v1H8zM8 7.500h6v1H8z" /></svg>
      </IconButton>
    </ControlBar>
  </>
);

const Tools = () => (
  <Toolbar>
    <DockHead $left><DoubleArrow /></DockHead>
    <GripRow><Grip $wide as="div" /></GripRow>
    <svg width="0" height="0"><linearGradient id="tool-fade"><stop stopColor="#444" /><stop offset="1" stopColor="#ccc" /></linearGradient></svg>
    {toolGroups.map((g, i) => (
      <ToolGroup key={i}>
        {g.map(([name, more]) => (
          <ToolButton key={name} $on={name === "選択"} $more={more} aria-label={name}>
            <svg width="20" height="20" viewBox="0 0 20 20">{toolArt[name]}</svg>
          </ToolButton>
        ))}
      </ToolGroup>
    ))}
    <MiniRow>
      <svg width="12" height="12" viewBox="0 0 12 12"><path d="M5.500 5.500h5v5h-5z" fill="none" stroke="#111" strokeWidth="2" /><path d="M1.500 1.500h6v6h-6z" fill="#fff" stroke="#111" /></svg>
      <svg width="12" height="12" viewBox="0 0 12 12" {...S}><path d="M3 3h3a3 3 0 0 1 3 3v3" strokeWidth="1.500" /><path d="M4 0v6L0 3zM6 8h6l-3 4z" fill="currentColor" stroke="none" /></svg>
    </MiniRow>
    <FillStroke><StrokeBox aria-label="線" /><FillBox aria-label="塗り" /></FillStroke>
    <ColorModes><button aria-label="カラー" /><button aria-label="グラデーション" /><button aria-label="なし" /></ColorModes>
    <ToolButton aria-label="描画方法"><svg width="14" height="14" viewBox="0 0 14 14"><circle cx="5" cy="5" r="4" fill="#777" stroke="#aaa" /><path d="M6 5h6v7H6z" fill="#c4c4c4" /></svg></ToolButton>
    <ToolButton aria-label="スクリーンモード"><svg width="18" height="14" viewBox="0 0 18 14" fill="#666" stroke="#bbb"><path d="M1.500 4.500h10v8h-10z" /><path d="M6.500 1.500h10v8h-10z" /></svg></ToolButton>
  </Toolbar>
);

const DocumentArea = () => (
  <Document>
    <TabStrip>
      <DocTab>名称未設定-1 @ 123% (RGB/プレビュー)
        <IconButton aria-label="閉じる"><svg width="6" height="6" viewBox="0 0 6 6" stroke="#ddd"><path d="M0 0l6 6M6 0L0 6" /></svg></IconButton>
      </DocTab>
    </TabStrip>
    <CanvasRow>
      <Canvas><Bleed /><Artboard /></Canvas>
      <VScroll><Tri d="up" s={9} /><Tri s={9} /></VScroll>
    </CanvasRow>
    <StatusRow>
      <Group $indent>
        <StatusCombo><StatusInput $w={52} defaultValue="123%" aria-label="ズーム" /><Arrow aria-label="ズームメニュー"><Tri /></Arrow></StatusCombo>
      </Group>
      <NavGroup>
        <svg width="8" height="8" viewBox="0 0 8 8" fill="currentColor"><path d="M0 0h1.500v8H0zM8 0v8L2.500 4z" /></svg>
        <Tri d="left" s={8} />
      </NavGroup>
      <StatusCombo><StatusInput $w={42} defaultValue="1" aria-label="アートボード" /><Arrow aria-label="アートボードメニュー"><Tri /></Arrow></StatusCombo>
      <NavGroup>
        <Tri d="right" s={8} />
        <svg width="8" height="8" viewBox="0 0 8 8" fill="currentColor"><path d="M6.500 0H8v8H6.500zM0 0v8l5.500-4z" /></svg>
      </NavGroup>
      <StatusText>選択</StatusText>
      <IconButton aria-label="ステータスメニュー"><svg width="17" height="8" viewBox="0 0 17 8" fill="currentColor"><path d="M6 0v8l5-4z" /></svg></IconButton>
      <HScroll><Tri d="left" s={9} /><HThumb /><Tri d="right" s={9} /></HScroll>
      <svg width="15" height="15" />
    </StatusRow>
  </Document>
);

const SwatchDock = () => (
  <Dock $w={278}>
    <DockHead><DoubleArrow /></DockHead>
    <Panel $basis={185}>
      <PanelTabs>
        <PanelTab $on>スウォッチ</PanelTab>
        <PanelTab>カラーガイド</PanelTab>
        <PanelTab>カラー</PanelTab>
        <PanelMenu aria-label="パネルメニュー"><MenuLines /></PanelMenu>
      </PanelTabs>
      <SwatchHead>
        <FillStroke><StrokeBox aria-label="線" /><FillBox aria-label="塗り" /></FillStroke>
        <ViewToggle>
          <button aria-label="リスト表示"><svg width="12" height="14" viewBox="0 0 12 14" fill="currentColor"><path d="M0 0h12v2H0zM0 4h12v2H0zM0 8h12v2H0zM0 12h12v2H0z" /></svg></button>
          <button aria-label="サムネール表示"><svg width="14" height="14" viewBox="0 0 14 14" fill="currentColor"><path d="M0 0h4v4H0zM5 0h4v4H5zM10 0h4v4h-4zM0 5h4v4H0zM5 5h4v4H5zM10 5h4v4h-4zM0 10h4v4H0zM5 10h4v4H5zM10 10h4v4h-4z" /></svg></button>
        </ViewToggle>
      </SwatchHead>
      <ListBox $h={107}>
        <SwatchRows>
          <SwatchRow>
            <Swatch $bg="linear-gradient(135deg, #fff 43%, #c8102e 44% 56%, #fff 57%)" aria-label="なし" />
            <Swatch $bg="#e8e8e8" aria-label="レジストレーション"><svg width="13" height="13" viewBox="0 0 13 13" fill="none" stroke="#333"><circle cx="6.500" cy="6.500" r="4.500" /><circle cx="6.500" cy="6.500" r="2" /><path d="M6.500 0v13M0 6.500h13" strokeWidth=".7" /></svg></Swatch>
            {row1.map((x) => <Swatch key={x} $bg={x} aria-label={x} />)}
          </SwatchRow>
          <SwatchRow>{row2.map((x) => <Swatch key={x} $bg={x} aria-label={x} />)}</SwatchRow>
          <SwatchRow>{row3.map((x) => <Swatch key={x} $bg={x} aria-label="スウォッチ" />)}</SwatchRow>
          <SwatchRow $gap><Swatch aria-label="グレー"><FolderSwatch /></Swatch>{grays.map((x) => <Swatch key={x} $bg={x} aria-label={x} />)}</SwatchRow>
          <SwatchRow $gap><Swatch aria-label="ブライト"><FolderSwatch /></Swatch>{brights.map((x) => <Swatch key={x} $bg={x} aria-label={x} />)}</SwatchRow>
        </SwatchRows>
        <VScroll $w={12}><Tri d="up" /><Tri /></VScroll>
      </ListBox>
      <Footer $h={20} $end={1}>
        <Foot name="library" label="ライブラリ" />
        <Foot name="share" label="共有" />
        <Foot name="cloud" dim label="CC ライブラリに追加" />
        <Spacer />
        <Foot name="grid" label="表示メニュー" />
        <Foot name="list" dim label="オプション" />
        <Foot name="folder" label="新規グループ" />
        <Foot name="page" label="新規" />
        <Foot name="trash" dim label="削除" />
        <Corner />
      </Footer>
    </Panel>
    <Panel $basis={336}><PanelTabs /></Panel>
    <Panel>
      <PanelTabs />
      <ListBox $top={5}>
        <SymbolRow>
          {symbolArt.map((art, i) => (
            <SymbolCell key={i} aria-label={`シンボル ${i + 1}`}><svg width="32" height="32" viewBox="0 0 32 32">{art}</svg></SymbolCell>
          ))}
        </SymbolRow>
        <VScroll $w={12}><Tri d="up" /><Tri /></VScroll>
      </ListBox>
      <Footer $h={19} $end={31}>
        <Foot name="library" label="シンボルライブラリ" />
        <Spacer />
        <Foot name="place" dim label="配置" />
        <Foot name="unlink" dim label="リンクを解除" />
        <Foot name="list" dim label="オプション" />
        <Foot name="page" dim label="新規シンボル" />
        <Foot name="trash" dim label="削除" />
      </Footer>
    </Panel>
  </Dock>
);

const AppearanceDock = () => (
  <Dock $w={230}>
    <DockHead><DoubleArrow /></DockHead>
    <Panel $basis={480}>
      <PanelTabs>
        <PanelTab $on>アピアランス</PanelTab>
        <PanelMenu aria-label="パネルメニュー"><MenuLines /></PanelMenu>
      </PanelTabs>
      <Rows $top={7}>
        <AppearanceRow $head>
          <AttrName $w={45}><Thumb as="div" $size={20} /></AttrName>選択なし
        </AppearanceRow>
        <AppearanceRow>
          <EyeCell aria-label="表示"><Eye /></EyeCell><Twisty aria-label="開く"><Tri d="right" s={8} /></Twisty>
          <AttrName $w={68}><HotLabel as="span">線：</HotLabel></AttrName><Thumb $size={18} $bg="#231815" /><AttrValue $gap>1 pt</AttrValue>
        </AppearanceRow>
        <AppearanceRow>
          <EyeCell aria-label="表示"><Eye /></EyeCell><Twisty aria-label="開く"><Tri d="right" s={8} /></Twisty>
          <AttrName $w={68}>塗り：</AttrName><Thumb $size={18} />
        </AppearanceRow>
        <AppearanceRow>
          <EyeCell $dim aria-label="表示"><Eye /></EyeCell><Twisty aria-hidden />
          <AttrName $w={83}><HotLabel as="span">不透明度：</HotLabel></AttrName><AttrValue>初期設定</AttrValue>
        </AppearanceRow>
      </Rows>
      <Footer $h={20} $end={1}>
        <Spacer />
        <Foot name="none" label="消去" />
        <Foot name="page" dim label="複製" />
        <Foot name="trash" dim label="削除" />
        <Corner />
      </Footer>
    </Panel>
    <Panel>
      <PanelTabs><PanelMenu aria-label="パネルメニュー"><MenuLines /></PanelMenu></PanelTabs>
      <Rows>
        <LayerRow><LayerName>レイヤー 1</LayerName><LayerTarget aria-label="ターゲット"><svg width="10" height="10" viewBox="0 0 10 10" {...S}><circle cx="5" cy="5" r="4" strokeWidth="1.500" /></svg></LayerTarget></LayerRow>
      </Rows>
      <LayerFooter $h={19} $end={24}>
        <span>1 レイヤー</span>
        <Spacer />
        <Foot name="find" dim label="オブジェクトの位置" />
        <Foot name="clip" dim label="クリッピングマスク" />
        <Foot name="sub" label="新規サブレイヤー" />
        <Foot name="page" label="新規レイヤー" />
        <Foot name="trash" dim label="削除" />
      </LayerFooter>
    </Panel>
  </Dock>
);

const ColorPicker = () => {
  const hex = useRef<HTMLInputElement>(null);
  useEffect(() => {
    hex.current?.focus();
    hex.current?.select();
  }, []);
  return (
    <Dialog role="dialog" aria-label="カラーピッカー">
      <DialogTitle>カラーピッカー</DialogTitle>
      <DialogBody>
        <PickerSide>
          <div>カラーを選択：</div>
          <PickerRow>
            <ColorField />
            <SliderWrap>
              <input type="range" min="0" max="255" defaultValue="255" aria-label="G" />
              <svg width="41" height="9" viewBox="0 0 41 9" fill="#ccc" stroke="#222"><path d="M.5.500h3l4 4-4 4h-3zM40.500.500h-3l-4 4 4 4h3z" /></svg>
            </SliderWrap>
          </PickerRow>
          <CheckLabel><input type="checkbox" />Web セーフカラーのみに制限 (O)</CheckLabel>
        </PickerSide>
        <ValueSide>
          <TopRow>
            <Preview />
            <DialogButtons>
              <DialogButton $primary>OK</DialogButton>
              <DialogButton>キャンセル</DialogButton>
              <DialogButton>スウォッチ</DialogButton>
            </DialogButtons>
          </TopRow>
          <Columns>
            <div>
              {rgb.map(([n, v, id]) => (
                <FieldRow key={id}>
                  <Radio type="radio" name="channel" aria-label={n} defaultChecked={id === "g"} />
                  <FieldLabel $w={23} htmlFor={`f-${id}`}>{n}：</FieldLabel>
                  <ValueInput id={`f-${id}`} defaultValue={v} />
                </FieldRow>
              ))}
              <FieldRow>
                <FieldLabel htmlFor="f-hex" $w={16}>#</FieldLabel>
                <HexInput id="f-hex" ref={hex} defaultValue="FFFFFF" />
              </FieldRow>
            </div>
            <div>
              {cmyk.map(([n, v]) => (
                <FieldRow key={n} $end>
                  <FieldLabel htmlFor={`f-${n}`}>{n}：</FieldLabel>
                  <ValueInput id={`f-${n}`} defaultValue={v} />
                </FieldRow>
              ))}
            </div>
          </Columns>
        </ValueSide>
      </DialogBody>
    </Dialog>
  );
};

const AdobeTile = ({ t, fg, bg }: { t: string; fg: string; bg: string }) => (
  <svg width="22" height="22" viewBox="0 0 22 22"><rect x="1" y="1" width="20" height="20" fill={bg} stroke={fg} strokeWidth="1.500" /><text x="11" y="15.500" textAnchor="middle" fontSize="12" fontWeight="600" fill={fg}>{t}</text></svg>
);

const OfficeTile = ({ t, color }: { t: string; color: string }) => (
  <svg width="24" height="24" viewBox="0 0 24 24"><path d="M12 4h11v16H12z" fill="#fff" /><path d="M14 7h7M14 10h7M14 13h7M14 16h7" stroke={color} strokeWidth="1.500" /><path d="M1 3l13-2v22L1 21z" fill={color} /><text x="7.500" y="16.500" textAnchor="middle" fontSize="12" fontWeight="700" fill="#fff">{t}</text></svg>
);

const TaskbarArea = () => (
  <Taskbar>
    <StartButton aria-label="スタート">
      <svg width="17" height="17" viewBox="0 0 17 17" fill="#fff"><path d="M0 2.500l7-1V8H0zM8 1.300L17 0v8H8zM0 9h7v6.500l-7-1zM8 9h9v8l-9-1.300z" /></svg>
    </StartButton>
    <CortanaBox>
      <svg width="22" height="22" viewBox="0 0 22 22"><circle cx="11" cy="11" r="9" fill="none" stroke="#fff" strokeWidth="2.500" /></svg>
      <input placeholder="ここに入力して検索" aria-label="ここに入力して検索" />
      <svg width="12" height="18" viewBox="0 0 12 18" {...S} strokeWidth="1.200"><rect x="3.500" y="1" width="5" height="10" /><path d="M1 8v4q0 2 2 2h6q2 0 2-2V8M6 14v3M3 17h6" /></svg>
    </CortanaBox>
    <TaskButton aria-label="タスクビュー"><svg width="20" height="14" viewBox="0 0 20 14" fill="none" stroke="#fff" strokeWidth="1.300"><path d="M4.500.7h11v12.600h-11zM3 2.500H.7v9H3M17 2.500h2.300v9H17" /></svg></TaskButton>
    <TaskButton aria-label="ストア"><svg width="22" height="24" viewBox="0 0 22 24"><path d="M5 6c0-6 7-6 7 0M9 6c0-5 7-6 8 0" fill="none" stroke="#fff" strokeWidth="1.300" /><path d="M1 6h20l-1 17-14-1.500L1 20z" fill="#fff" /><path d="M4 9.500h4.500V14H4zM9.500 9.500h5.500V14H9.500zM4 15h4.500v4L4 18.500zM9.500 15h5.500v5l-5.500-.7z" fill="#000" /></svg></TaskButton>
    <TaskButton $state="run" $bg="linear-gradient(90deg, #000 37px, #252525 0)" aria-label="付箋"><svg width="18" height="18" viewBox="0 0 18 18"><path d="M0 0h18v10l-7 8H0z" fill="#f3e9a0" /><path d="M18 10v8h-7z" fill="#111" /><path d="M10 18v-6h8z" fill="#8a8450" /></svg></TaskButton>
    <RunningApps>
      <TaskButton aria-label="エクスプローラー"><svg width="24" height="22" viewBox="0 0 24 22"><path d="M1 2h8l2 3h12v14H1z" fill="#f6dd8a" /><path d="M1 5h22v2H1z" fill="#e8c765" /><path d="M5 20v-9h14v9h-4v-4H9v4z" fill="#4aaed6" /></svg></TaskButton>
      <TaskButton $state="run" aria-label="メール"><svg width="26" height="24" viewBox="0 0 26 24"><path d="M7 1l18 4-4 14L3 15z" fill="#9dbb6a" /><path d="M6 3l18 3-2 12H4z" fill="#f0cf86" /><path d="M4 8l18-1-1 12H3z" fill="#dcebf8" stroke="#8fb1d0" /><path d="M16 9h3v3h-3z" fill="#2f6fbd" /><path d="M1 21c4-4 9-1 12-1s6-2 10-1c-3 4-8 3-12 3s-7-1-10-1z" fill="#e6b25b" /></svg></TaskButton>
      <TaskButton aria-label="Excel"><OfficeTile t="X" color="#1e7145" /></TaskButton>
      <TaskButton aria-label="Word"><OfficeTile t="W" color="#2b579a" /></TaskButton>
      <TaskButton $state="active" aria-label="Illustrator"><AdobeTile t="Ai" fg="#f08a24" bg="#2a1100" /></TaskButton>
      <TaskButton aria-label="Photoshop"><AdobeTile t="Ps" fg="#2fb4e6" bg="#061e2b" /></TaskButton>
      <TaskButton aria-label="ペイント"><svg width="26" height="26" viewBox="0 0 26 26"><path d="M2 14C2 7 10 3 17 5s8 8 5 12-6 2-8 4-4 4-8 2-4-5-4-9z" fill="#dce8f0" stroke="#a5b8c4" /><circle cx="7" cy="13" r="2.200" fill="#d9463a" /><circle cx="10" cy="8.500" r="2" fill="#ea9a33" /><circle cx="15.500" cy="8" r="2" fill="#53ad4a" /><circle cx="7.500" cy="18.500" r="2" fill="#3f74c0" /><circle cx="12.500" cy="16" r="2" fill="#252525" /><path d="M15 25L21 6" stroke="#c98d4e" strokeWidth="2.500" /><path d="M19 1h6l-3 7z" fill="#d9a877" /></svg></TaskButton>
      <TaskButton aria-label="Chrome"><svg width="22" height="22" viewBox="0 0 22 22"><path d="M11 11L1.500 5.500A11 11 0 0 1 20.500 5.500z" fill="#dd4b3e" /><path d="M11 11L1.500 5.500A11 11 0 0 0 11 22z" fill="#1da15f" /><path d="M11 11V22A11 11 0 0 0 20.500 5.500z" fill="#ffce44" /><circle cx="11" cy="11" r="5" fill="#fff" /><circle cx="11" cy="11" r="4" fill="#4c8bf5" /></svg></TaskButton>
      <TaskButton $state="run" aria-label="Skype"><svg width="24" height="24" viewBox="0 0 24 24"><circle cx="7" cy="7" r="6" fill="#1aa5e0" /><circle cx="11.500" cy="11.500" r="10" fill="#1aa5e0" /><circle cx="16" cy="17" r="6" fill="#1aa5e0" /><path d="M16 8c-1-3-8-3-8 0s8 2 8 5.500-7 3.500-8.500.5" fill="none" stroke="#fff" strokeWidth="2.500" /><circle cx="18" cy="18" r="5.500" fill="#f6fff0" stroke="#b9e08c" /></svg></TaskButton>
    </RunningApps>
    <Tray>
      <TrayIcons>
        <svg width="12" height="8" viewBox="0 0 12 8" fill="none" stroke="#fff" strokeWidth="1.500"><path d="M1 7l5-5.500L11 7" /></svg>
        <svg width="17" height="14" viewBox="0 0 17 14" fill="none" stroke="#fff" strokeWidth="1.300"><path d="M6 2.500h10v7.500H4V6M10 10v3M6 13h8" /><path d="M1 1h4v3H1zM3 4v4" /></svg>
        <svg width="17" height="14" viewBox="0 0 17 14" fill="none" stroke="#fff" strokeWidth="1.200"><path d="M1 5h2l4-3.500v11L3 9H1zM9 5q1.500 2 0 4M11 3.500q3 3.500 0 7M13 2q4.500 5 0 10" /></svg>
        <ImeMark>A</ImeMark>
      </TrayIcons>
      <Clock>9:23<br />2017/05/30</Clock>
      <svg width="26" height="26" viewBox="0 0 26 26"><path d="M1 2h16v13H8l-4 4v-4H1z" fill="#fff" /><path d="M4 5.500h10M4 8.500h10M4 11.500h6" stroke="#000" /><circle cx="17" cy="18" r="7.500" fill="#2c2c2c" stroke="#999" /><text x="17" y="22" textAnchor="middle" fontSize="11" fontWeight="600" fill="#fff">1</text></svg>
      <ShowDesktop aria-label="デスクトップの表示" />
    </Tray>
  </Taskbar>
);

export default function App() {
  return (
    <>
      <Global />
      <Desktop>
        <Top />
        <Workspace>
          <Tools />
          <DocumentArea />
          <SwatchDock />
          <AppearanceDock />
        </Workspace>
        <TaskbarArea />
        <ColorPicker />
      </Desktop>
    </>
  );
}
